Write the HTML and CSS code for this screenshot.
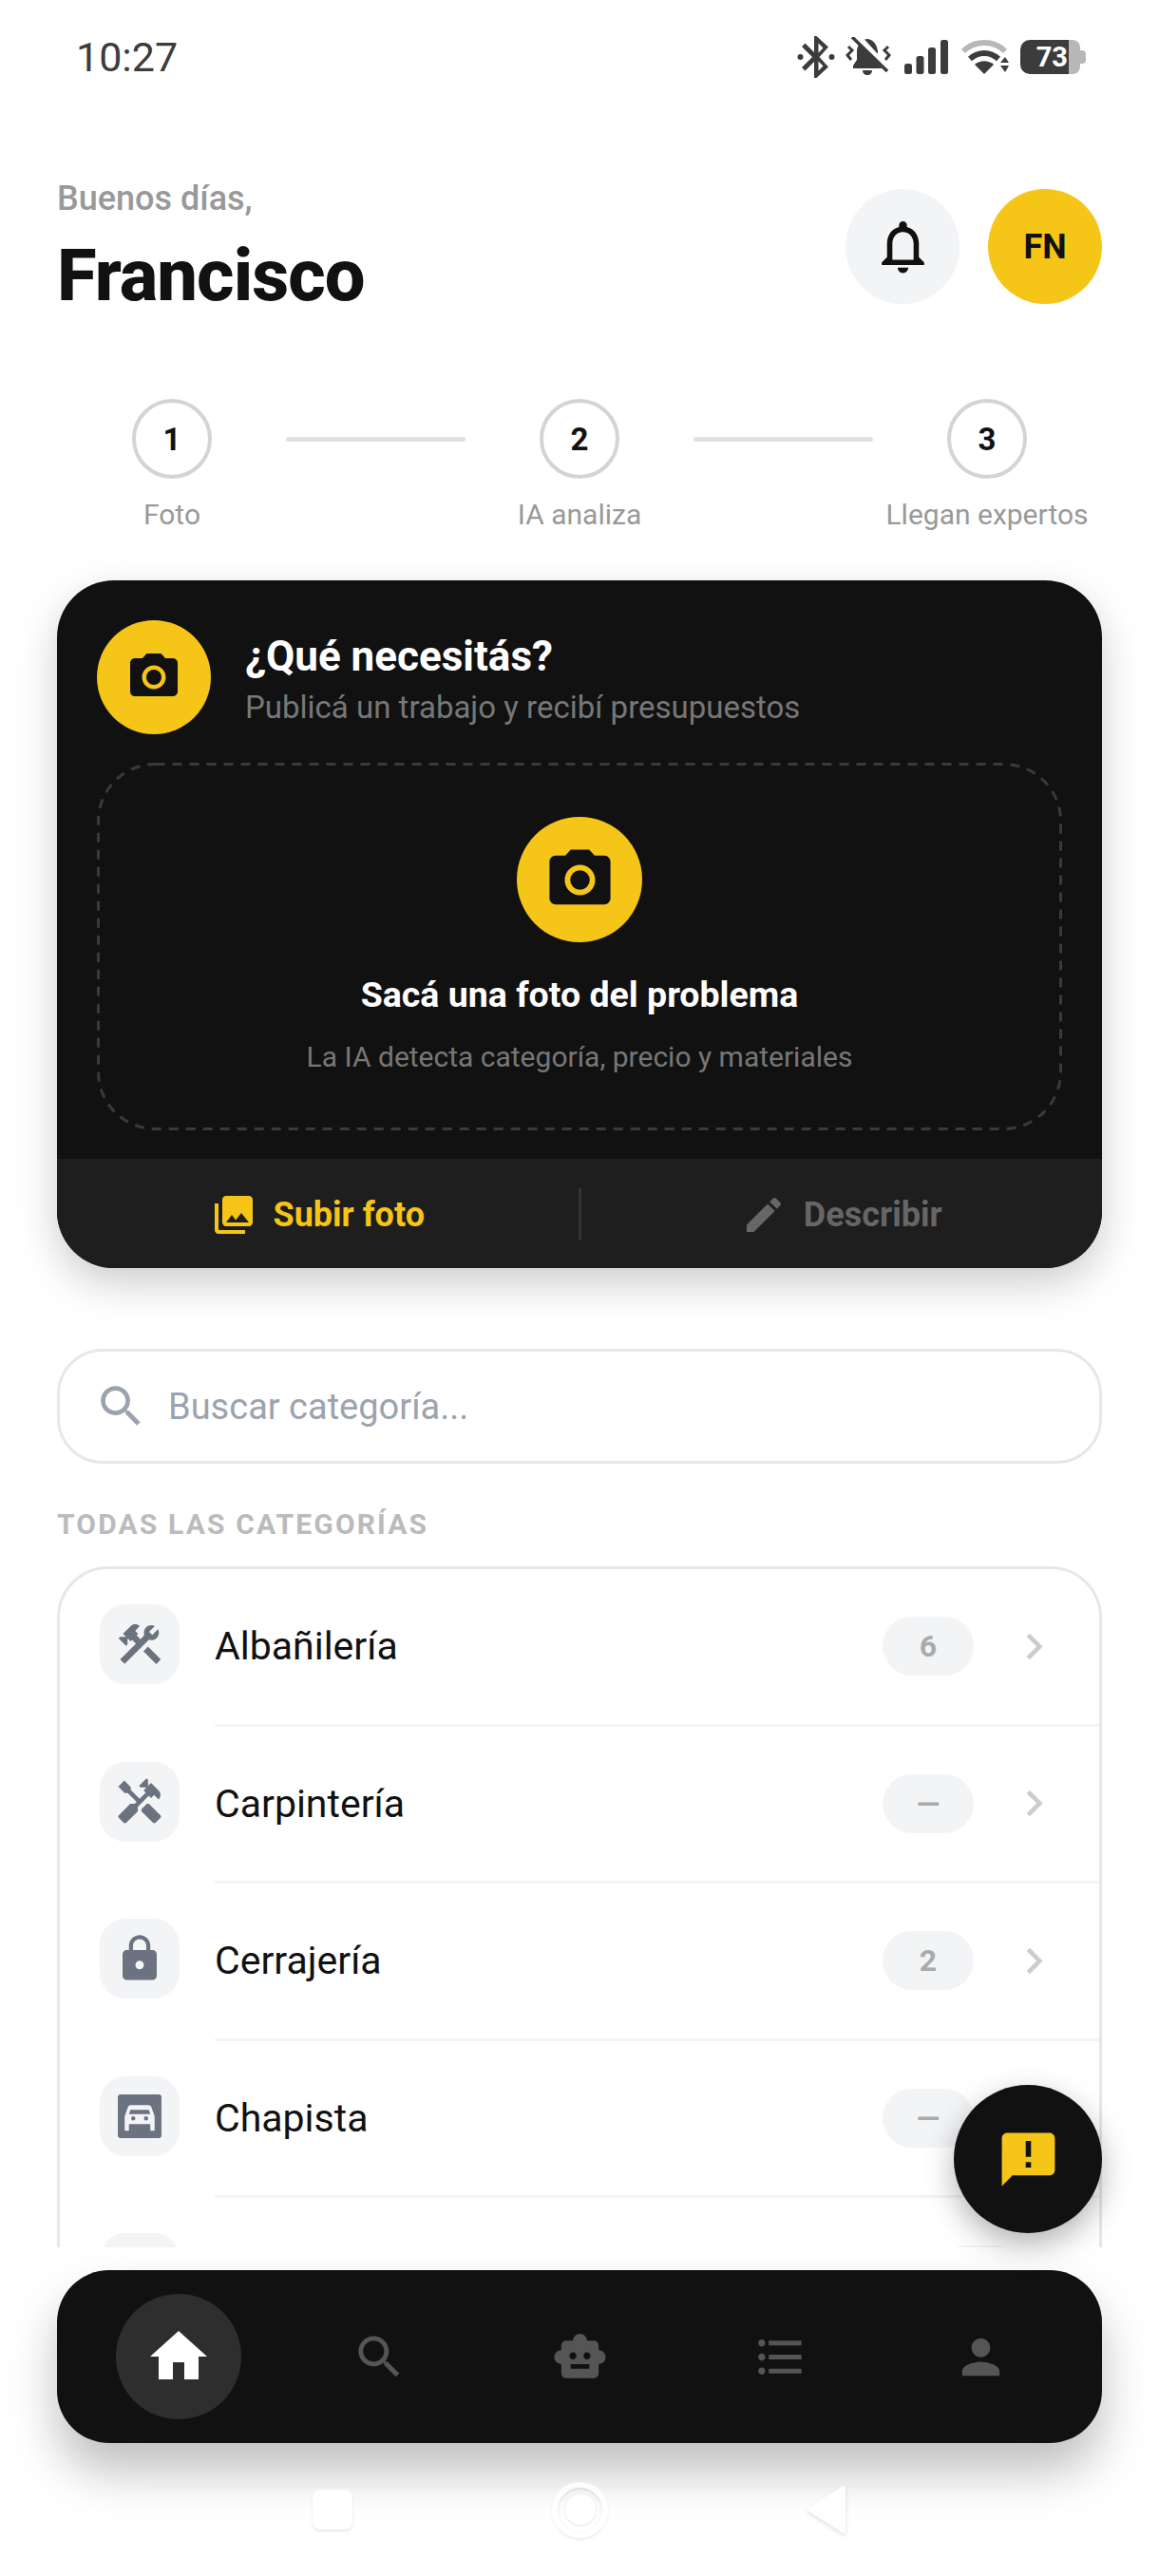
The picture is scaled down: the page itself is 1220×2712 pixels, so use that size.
FILE: index.html
```html
<!DOCTYPE html>
<html lang="es">
<head>
<meta charset="utf-8">
<title>Inicio</title>
<link rel="stylesheet" href="styles.css">
</head>
<body>
<div class="app">
  <div class="statusbar">
    <span class="time">10:27</span>
    <div class="sys-icons">
      <svg class="si-bt" viewBox="0 0 40 44"><path fill="#3c3c3c" d="M18 0h2.500L33 11.500 23.500 22 33 32.500 20.500 44H18V27l-9.500 9.500-3.500-3.500L16 22 5 11l3.500-3.500L18 17zm4.500 7.500v10l5-5zm0 19v10l5-5z"/><circle fill="#3c3c3c" cx="3.500" cy="22" r="3"/><circle fill="#3c3c3c" cx="36.500" cy="22" r="3"/></svg>
      <svg class="si-bell" viewBox="0 0 48 42"><path fill="#3c3c3c" d="M12 14c1-7 6-12 11-12s10 5 11 13v9l4 6v3H8v-3l4-6z"/><path fill="#3c3c3c" d="M18 35h10c0 3-2 5-5 5s-5-2-5-5z"/><path stroke="#fff" stroke-width="7" d="M11 -2l35 38"/><path stroke="#3c3c3c" stroke-width="3.500" d="M7 0l37 36"/><path fill="none" stroke="#3c3c3c" stroke-width="3" d="M3 10l4 4-5 5 4 5M45 10l-4 4 5 5-4 5"/></svg>
      <svg class="si-signal" viewBox="0 0 46 36"><rect fill="#3c3c3c" x="0" y="25" width="8" height="11" rx="2.500"/><rect fill="#3c3c3c" x="12.500" y="17" width="8" height="19" rx="2.500"/><rect fill="#3c3c3c" x="25" y="8" width="8" height="28" rx="2.500"/><rect fill="#3c3c3c" x="38" y="0" width="8" height="36" rx="2.500"/></svg>
      <svg class="si-wifi" viewBox="0 0 50 36"><path fill="none" stroke="#b8b8b8" stroke-width="6" d="M2 12C14 0 34 0 46 12"/><path fill="none" stroke="#3c3c3c" stroke-width="6" d="M9 20c9-8 21-8 30 0"/><path fill="#3c3c3c" d="M14 26c6-5 14-5 20 0L24 36z"/><path fill="#3c3c3c" d="M41 24l5-6 4 6zM41 27h9l-4 7z"/></svg>
      <div class="battery">
        <span class="battery-fill">73</span>
        <span class="battery-rest"></span>
        <span class="battery-nub"></span>
      </div>
    </div>
  </div>

  <main class="content">
    <header class="header">
      <div class="hello">
        <div class="greeting">Buenos días,</div>
        <h1 class="name">Francisco</h1>
      </div>
      <div class="header-actions">
        <div class="round round-grey"><svg class="ic-bell" viewBox="0 0 24 24"><path d="M12 22c1.100 0 2-.9 2-2h-4c0 1.100.89 2 2 2zm6-6v-5c0-3.070-1.640-5.640-4.500-6.320V4c0-.83-.67-1.500-1.500-1.500s-1.500.67-1.500 1.500v.68C7.630 5.360 6 7.920 6 11v5l-2 2v1h16v-1l-2-2zm-2 1H8v-6c0-2.480 1.510-4.500 4-4.500s4 2.020 4 4.500v6z"/></svg></div>
        <div class="round round-yellow">FN</div>
      </div>
    </header>

    <section class="steps">
      <div class="step"><div class="step-num">1</div><div class="step-label">Foto</div></div>
      <div class="step-line"></div>
      <div class="step"><div class="step-num">2</div><div class="step-label">IA analiza</div></div>
      <div class="step-line"></div>
      <div class="step"><div class="step-num">3</div><div class="step-label">Llegan expertos</div></div>
    </section>

    <section class="card">
      <div class="card-body">
        <div class="card-head">
          <div class="cam-circle cam-small"><svg viewBox="0 0 24 24"><use href="#cam"/></svg></div>
          <div class="card-head-text">
            <div class="card-title">¿Qué necesitás?</div>
            <div class="card-sub">Publicá un trabajo y recibí presupuestos</div>
          </div>
        </div>
        <div class="drop">
          <svg class="drop-outline" viewBox="0 0 1016 387"><rect x="1.500" y="1.500" width="1013" height="384" rx="60" ry="60"/></svg>
          <div class="cam-circle cam-big"><svg viewBox="0 0 24 24"><use href="#cam"/></svg></div>
          <div class="drop-title">Sacá una foto del problema</div>
          <div class="drop-sub">La IA detecta categoría, precio y materiales</div>
        </div>
      </div>
      <div class="card-foot">
        <div class="foot-btn foot-on"><svg viewBox="0 0 24 24"><path d="M22 16V4c0-1.100-.9-2-2-2H8c-1.100 0-2 .9-2 2v12c0 1.100.9 2 2 2h12c1.100 0 2-.9 2-2zm-11-4l2.030 2.710L16 11l4 5H8l3-4zM2 6v14c0 1.100.9 2 2 2h14v-2H4V6H2z"/></svg><span>Subir foto</span></div>
        <div class="foot-div"></div>
        <div class="foot-btn foot-off"><svg viewBox="0 0 24 24"><path d="M3 17.250V21h3.750L17.810 9.940l-3.750-3.750L3 17.250zM20.710 7.040c.39-.39.39-1.020 0-1.410l-2.340-2.340c-.39-.39-1.020-.39-1.410 0l-1.830 1.830 3.750 3.750 1.830-1.830z"/></svg><span>Describir</span></div>
      </div>
    </section>

    <div class="search">
      <svg viewBox="0 0 24 24"><use href="#srch"/></svg>
      <span>Buscar categoría...</span>
    </div>

    <div class="section-label">TODAS LAS CATEGORÍAS</div>

    <section class="list">
      <div class="row">
        <div class="row-icon"><svg viewBox="0 0 24 24"><path d="M13.780 15.300L19.780 21.300L21.890 19.140L15.890 13.140L13.780 15.300M17.500 10.100C17.110 10.100 16.690 10.050 16.360 9.910L4.970 21.250L2.860 19.140L10.270 11.740L8.500 9.960L7.780 10.660L6.330 9.250V12.110L5.630 12.810L2.110 9.250L2.810 8.550H5.620L4.220 7.140L7.780 3.580C8.950 2.410 10.830 2.410 12 3.580L9.890 5.740L11.300 7.140L10.590 7.850L12.380 9.630L14.200 7.750C14.060 7.420 14 7 14 6.630C14 4.660 15.560 3.110 17.500 3.110C18.090 3.110 18.610 3.250 19.080 3.530L16.410 6.200L17.910 7.700L20.580 5.030C20.860 5.500 21 6 21 6.630C21 8.590 19.440 10.100 17.500 10.100Z"/></svg></div>
        <div class="row-main"><span class="row-name">Albañilería</span><span class="badge">6</span><svg class="chev" viewBox="0 0 24 24"><use href="#chev"/></svg></div>
      </div>
      <div class="row">
        <div class="row-icon"><svg viewBox="0 0 24 24"><path d="M21.670 18.170l-5.300-5.300h-.99l-2.540 2.540v.99l5.300 5.300c.39.39 1.020.39 1.410 0l2.120-2.120c.39-.38.39-1.020 0-1.410z"/><path d="M17.340 10.190l1.410-1.410 2.120 2.120c1.170-1.170 1.170-3.070 0-4.240l-3.540-3.540-1.410 1.410V1.710l-.7-.71-3.540 3.540.71.71h2.830l-1.410 1.410 1.060 1.060-2.890 2.890-4.130-4.130V5.060L4.830 2.040 2 4.870 5.030 7.900h1.410l4.130 4.130-.85.85H7.610l-5.300 5.300c-.39.39-.39 1.020 0 1.410l2.120 2.120c.39.39 1.020.39 1.410 0l5.300-5.300v-2.120l5.150-5.150 1.050 1.050z"/></svg></div>
        <div class="row-main"><span class="row-name">Carpintería</span><span class="badge">—</span><svg class="chev" viewBox="0 0 24 24"><use href="#chev"/></svg></div>
      </div>
      <div class="row">
        <div class="row-icon"><svg viewBox="0 0 24 24"><path d="M18 8h-1V6c0-2.760-2.240-5-5-5S7 3.240 7 6v2H6c-1.100 0-2 .9-2 2v10c0 1.100.9 2 2 2h12c1.100 0 2-.9 2-2V10c0-1.100-.9-2-2-2zm-6 9c-1.100 0-2-.9-2-2s.9-2 2-2 2 .9 2 2-.9 2-2 2zm3.100-9H8.900V6c0-1.710 1.390-3.100 3.100-3.100 1.710 0 3.100 1.390 3.100 3.100v2z"/></svg></div>
        <div class="row-main"><span class="row-name">Cerrajería</span><span class="badge">2</span><svg class="chev" viewBox="0 0 24 24"><use href="#chev"/></svg></div>
      </div>
      <div class="row">
        <div class="row-icon"><svg viewBox="0 0 24 24"><path fill-rule="evenodd" d="M3 1.800h18c.7 0 1.200.5 1.200 1.200v18c0 .7-.5 1.200-1.200 1.200H3c-.7 0-1.200-.5-1.200-1.200V3c0-.7.5-1.200 1.200-1.200zM8 6.800h8c.8 0 1.200.4 1.500 1l1.500 4.200v6.800h-2v-3.100H7v3.100H5V12l1.500-4.200c.3-.6.7-1 1.500-1zM7.700 9h8.600l.7 2H7zM9 12a1 1 0 1 0 0 2 1 1 0 0 0 0-2zM15 12a1 1 0 1 0 0 2 1 1 0 0 0 0-2z"/></svg></div>
        <div class="row-main"><span class="row-name">Chapista</span><span class="badge">—</span><svg class="chev" viewBox="0 0 24 24"><use href="#chev"/></svg></div>
      </div>
      <div class="row">
        <div class="row-icon"></div>
        <div class="row-main"><span class="row-name"></span><span class="badge"></span></div>
      </div>
    </section>
  </main>

  <div class="dock">
    <nav class="nav">
      <div class="nav-item nav-active"><svg viewBox="0 0 24 24"><path d="M10 20v-6h4v6h5v-8h3L12 3 2 12h3v8z"/></svg></div>
      <div class="nav-item"><svg viewBox="0 0 24 24"><use href="#srch"/></svg></div>
      <div class="nav-item"><svg viewBox="0 0 24 24"><path d="M20 9V7c0-1.100-.9-2-2-2h-3c0-1.660-1.340-3-3-3S9 3.340 9 5H6c-1.100 0-2 .9-2 2v2c-1.660 0-3 1.340-3 3s1.340 3 3 3v4c0 1.100.9 2 2 2h12c1.100 0 2-.9 2-2v-4c1.660 0 3-1.340 3-3s-1.340-3-3-3zM7.500 11.500C7.500 10.670 8.170 10 9 10s1.500.67 1.500 1.500S9.830 13 9 13s-1.500-.67-1.500-1.500zM16 17H8v-2h8v2zm-1-4c-.83 0-1.500-.67-1.500-1.500S14.170 10 15 10s1.500.67 1.500 1.500S15.830 13 15 13z"/></svg></div>
      <div class="nav-item"><svg viewBox="0 0 24 24"><path d="M4 10.500c-.83 0-1.500.67-1.500 1.500s.67 1.500 1.500 1.500 1.500-.67 1.500-1.500-.67-1.500-1.500-1.500zm0-6c-.83 0-1.500.67-1.500 1.500S3.170 7.500 4 7.500 5.500 6.830 5.500 6 4.830 4.500 4 4.500zm0 12c-.83 0-1.500.68-1.500 1.500s.68 1.500 1.500 1.500 1.500-.68 1.500-1.500-.67-1.500-1.500-1.500zM7 19h14v-2H7v2zm0-6h14v-2H7v2zm0-8v2h14V5H7z"/></svg></div>
      <div class="nav-item"><svg viewBox="0 0 24 24"><path d="M12 12c2.210 0 4-1.790 4-4s-1.790-4-4-4-4 1.790-4 4 1.790 4 4 4zm0 2c-2.670 0-8 1.340-8 4v2h16v-2c0-2.660-5.330-4-8-4z"/></svg></div>
    </nav>
  </div>

  <div class="android-bar">
    <span class="a-square"></span>
    <span class="a-circle"><span class="a-dot"></span></span>
    <svg class="a-back" viewBox="0 0 42 52"><path d="M39 3v46L3 26z" fill="#fefefe" stroke="#fefefe" stroke-width="4" stroke-linejoin="round"/></svg>
  </div>

  <div class="fab"><svg viewBox="0 0 24 24"><path d="M20 2H4c-1.100 0-1.990.9-1.990 2L2 22l4-4h14c1.100 0 2-.9 2-2V4c0-1.100-.9-2-2-2zm-7 9h-2V5h2v6zm0 4h-2v-2h2v2z"/></svg></div>
</div>

<svg class="defs" aria-hidden="true">
  <defs>
    <g id="cam"><circle cx="12" cy="12" r="3.200"/><path d="M9 2L7.170 4H4c-1.100 0-2 .9-2 2v12c0 1.100.9 2 2 2h16c1.100 0 2-.9 2-2V6c0-1.100-.9-2-2-2h-3.170L15 2H9zm3 15c-2.760 0-5-2.240-5-5s2.240-5 5-5 5 2.240 5 5-2.240 5-5 5z"/></g>
    <path id="srch" d="M15.500 14h-.79l-.28-.27C15.410 12.590 16 11.110 16 9.500 16 5.910 13.090 3 9.500 3S3 5.910 3 9.500 5.910 16 9.500 16c1.610 0 3.090-.59 4.230-1.570l.27.28v.79l5 4.990L20.490 19l-4.990-5zm-6 0C7.010 14 5 11.990 5 9.500S7.010 5 9.500 5 14 7.010 14 9.500 11.990 14 9.500 14z"/>
    <path id="chev" d="M10 6L8.590 7.410 13.170 12l-4.580 4.590L10 18l6-6z"/>
  </defs>
</svg>
</body>
</html>
```

FILE: styles.css
```css
* { box-sizing: border-box; }
html, body { margin: 0; padding: 0; background: #fff; }
body { font-family: Roboto, "Liberation Sans", sans-serif; color: #111; }
.defs { width: 0; height: 0; display: block; overflow: hidden; }
svg { display: block; flex: none; }

.app { position: relative; width: 1220px; height: 2712px; overflow: hidden; background: #fff; }

.statusbar { height: 120px; padding: 0 77px 0 80px; display: flex; align-items: center; justify-content: space-between; }
.time { font-size: 43px; color: #3c3c3c; }
.sys-icons { display: flex; align-items: center; }
.si-bt { width: 40px; height: 44px; margin-right: 11px; }
.si-bell { width: 48px; height: 42px; margin-right: 14px; }
.si-signal { width: 46px; height: 36px; margin-right: 14px; }
.si-wifi { width: 50px; height: 36px; margin-right: 12px; }
.battery { display: flex; align-items: center; height: 36px; }
.battery-fill { width: 51px; height: 36px; background: #3c3c3c; color: #fff; border-radius: 10px 0 0 10px; font-size: 29px; font-weight: 700; line-height: 36px; text-align: right; padding-right: 1px; }
.battery-rest { width: 12px; height: 36px; background: #b8b8b8; border-radius: 0 8px 8px 0; }
.battery-nub { width: 6px; height: 14px; background: #b8b8b8; border-radius: 0 4px 4px 0; }

.content { height: 2246px; padding: 0 60px; overflow: hidden; }

.header { margin-top: 79px; height: 121px; display: flex; justify-content: space-between; align-items: flex-start; }
.hello { margin-top: -12px; }
.greeting { font-size: 36px; line-height: 44px; font-weight: 500; color: #999; }
.name { margin: 15px 0 0; font-size: 76px; line-height: 88px; font-weight: 800; letter-spacing: -1px; color: #111; }
.header-actions { display: flex; gap: 30px; }
.round { width: 120px; height: 121px; border-radius: 50%; display: flex; align-items: center; justify-content: center; }
.round-grey { background: #f3f4f6; }
.round-yellow { background: #f5c518; font-size: 36px; font-weight: 700; color: #111; }
.ic-bell { width: 67px; height: 67px; fill: #111; }

.steps { margin: 100px 13px 0; display: flex; align-items: flex-start; }
.step { width: 216px; display: flex; flex-direction: column; align-items: center; }
.step-num { width: 84px; height: 84px; border: 4px solid #d4d4d4; border-radius: 50%; display: flex; align-items: center; justify-content: center; font-size: 33px; font-weight: 700; color: #111; }
.step-label { margin-top: 17px; font-size: 30px; line-height: 42px; color: #999; white-space: nowrap; }
.step-line { flex: 1; height: 5px; margin: 40px 12px 0; background: #e0e0e0; border-radius: 3px; }

.card { margin-top: 48px; height: 724px; border-radius: 60px; background: #111; overflow: hidden; box-shadow: 0 16px 44px rgba(0,0,0,.2); }
.card-body { height: 609px; padding: 42px 42px 0; }
.card-head { display: flex; align-items: center; gap: 36px; height: 120px; }
.cam-circle { border-radius: 50%; background: #f5c518; display: flex; align-items: center; justify-content: center; fill: #111; }
.cam-small { width: 120px; height: 120px; }
.cam-small svg { width: 60px; height: 60px; }
.cam-big { width: 132px; height: 132px; }
.cam-big svg { width: 77px; height: 77px; }
.card-head-text { padding-top: 6px; }
.card-title { font-size: 44px; line-height: 52px; font-weight: 700; color: #fff; }
.card-sub { margin-top: 6px; font-size: 33px; line-height: 44px; color: #777; }
.drop { position: relative; margin-top: 30px; height: 387px; display: flex; flex-direction: column; align-items: center; padding-top: 57px; }
.drop-outline { position: absolute; inset: 0; width: 100%; height: 100%; fill: none; stroke: #3a3a3a; stroke-width: 3; stroke-dasharray: 10 8; }
.drop-title { margin-top: 30px; font-size: 37.500px; line-height: 50px; font-weight: 700; color: #fff; }
.drop-sub { margin-top: 19px; font-size: 30px; line-height: 44px; color: #777; }
.card-foot { height: 115px; background: #1e1e1e; display: flex; align-items: center; }
.foot-btn { flex: 1; display: flex; align-items: center; justify-content: center; gap: 18px; font-size: 36px; line-height: 50px; font-weight: 700; padding-top: 2px; }
.foot-btn svg { width: 48px; height: 48px; fill: currentColor; }
.foot-on { color: #f5c518; }
.foot-off { color: #666; }
.foot-div { width: 3px; height: 54px; background: #333; }

.search { margin-top: 85px; height: 121px; border: 3px solid #e5e7eb; border-radius: 48px; display: flex; align-items: center; padding-left: 36px; gap: 21px; font-size: 38px; color: #9ca3af; }
.search svg { width: 57px; height: 57px; fill: #9ca3af; }

.section-label { margin-top: 44px; font-size: 30px; line-height: 40px; font-weight: 700; letter-spacing: 2.150px; color: #bbb; }

.list { margin-top: 24px; border: 3px solid #e5e7eb; border-radius: 54px; background: #fff; }
.row { display: flex; height: 165.500px; padding-left: 42px; }
.row-icon { width: 84px; height: 84px; margin-top: 37px; margin-right: 37px; background: #f3f4f6; border-radius: 27px; display: flex; align-items: center; justify-content: center; fill: #6b7280; flex: none; }
.row-icon svg { width: 54px; height: 54px; }
.row-main { flex: 1; display: flex; align-items: center; border-bottom: 3px solid #f3f4f6; padding-right: 41px; }
.row-name { flex: 1; font-size: 41px; color: #111; }
.badge { width: 96px; height: 62px; border-radius: 31px; background: #f3f4f6; color: #aaa; font-size: 32px; font-weight: 700; line-height: 62px; text-align: center; margin-right: 36px; }
.chev { width: 55px; height: 55px; fill: #ccc; }

.dock { padding: 24px 60px 0; }
.nav { height: 182px; background: #111; border-radius: 55px; display: flex; align-items: center; justify-content: center; box-shadow: 0 30px 50px rgba(0,0,0,.25); }
.nav-item { width: 211px; display: flex; justify-content: center; align-items: center; fill: #555; }
.nav-item svg { width: 59px; height: 59px; }
.nav-active { fill: #fff; }
.nav-active svg { width: 132px; height: 132px; padding: 30px; border-radius: 50%; background: #2e2e2e; }

.android-bar { height: 140px; display: flex; justify-content: center; align-items: center; }
.a-square { width: 42px; height: 42px; background: rgba(255,255,255,.85); border-radius: 8px; box-shadow: 0 2px 3px rgba(0,0,0,.1); margin-right: 210px; }
.a-circle { width: 59px; height: 59px; border-radius: 50%; border: 6px solid rgba(255,255,255,.85); box-shadow: 0 2px 3px rgba(0,0,0,.08), inset 0 1px 3px rgba(0,0,0,.14); margin-right: 209px; display: flex; align-items: center; justify-content: center; }
.a-dot { width: 32px; height: 32px; border-radius: 50%; background: rgba(255,255,255,.9); box-shadow: 0 1px 3px rgba(0,0,0,.12); }
.a-back { width: 42px; height: 52px; filter: drop-shadow(0 2px 2px rgba(0,0,0,.12)); }

.fab { position: absolute; right: 60px; top: 2195px; width: 156px; height: 156px; border-radius: 50%; background: #111; display: flex; align-items: center; justify-content: center; fill: #f5c518; box-shadow: 0 12px 32px rgba(0,0,0,.3); }
.fab svg { width: 67px; height: 67px; }
```
